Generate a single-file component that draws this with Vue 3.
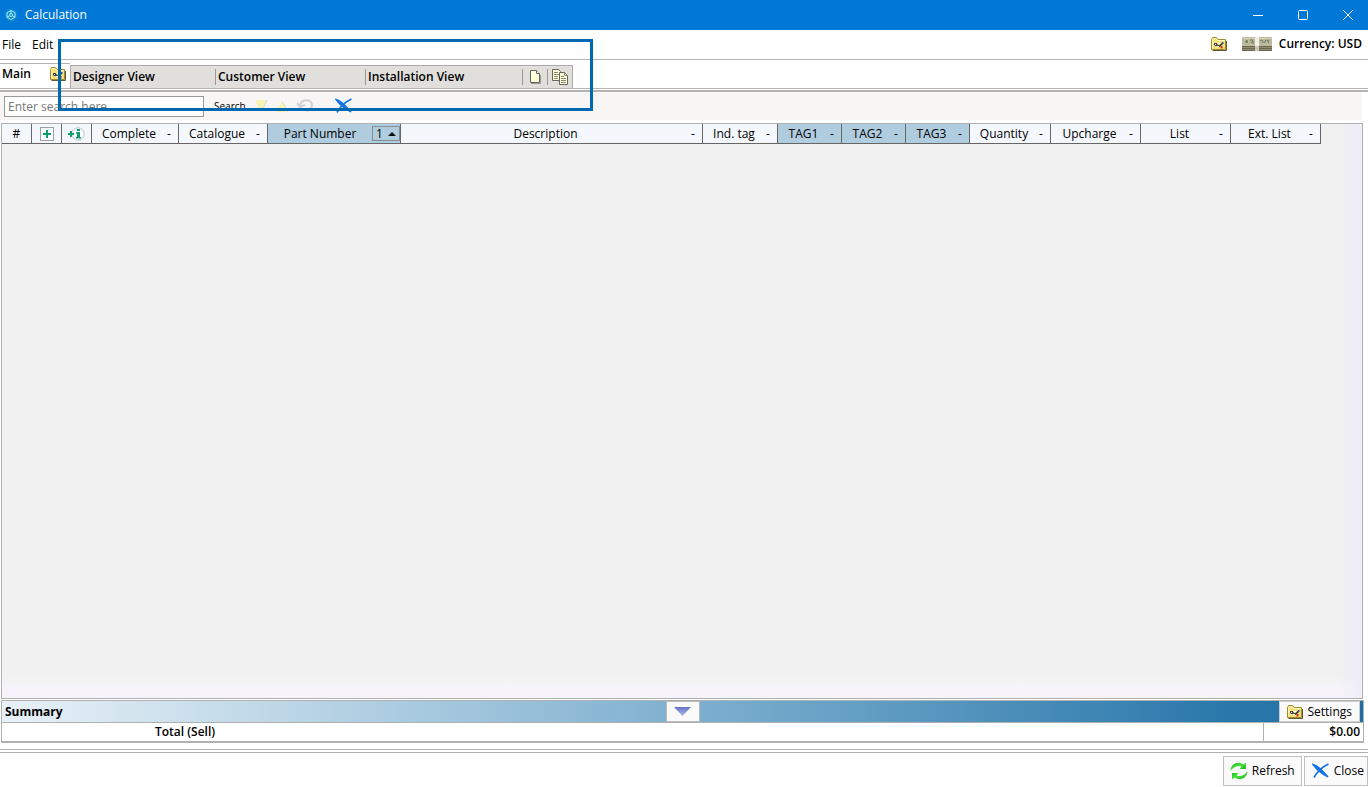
<script setup>
import { ref } from 'vue'

const search = ref('')
const views = [
  { name: 'Designer View', width: 145 },
  { name: 'Customer View', width: 150 },
  { name: 'Installation View', width: 157 },
]
const columns = [
  { id: 'no', label: '#', width: 30, plain: true },
  { id: 'add', icon: 'add', width: 30, plain: true },
  { id: 'info', icon: 'info', width: 30, plain: true },
  { id: 'complete', label: 'Complete', width: 87 },
  { id: 'catalogue', label: 'Catalogue', width: 89 },
  { id: 'part', label: 'Part Number', width: 133, marked: true, sort: 1 },
  { id: 'desc', label: 'Description', width: 0 },
  { id: 'ind', label: 'Ind. tag', width: 75 },
  { id: 'tag1', label: 'TAG1', width: 64, marked: true },
  { id: 'tag2', label: 'TAG2', width: 64, marked: true },
  { id: 'tag3', label: 'TAG3', width: 64, marked: true },
  { id: 'qty', label: 'Quantity', width: 81 },
  { id: 'up', label: 'Upcharge', width: 90 },
  { id: 'list', label: 'List', width: 90 },
  { id: 'ext', label: 'Ext. List', width: 90 },
]
</script>

<template>
  <svg class="defs" aria-hidden="true">
    <defs>
      <linearGradient id="arrow-fill" x1="0" y1="0" x2="0" y2="1">
        <stop offset="0" stop-color="#6475c2" />
        <stop offset="1" stop-color="#a9b8ea" />
      </linearGradient>
      <linearGradient id="refresh-fill" x1="0" y1="0" x2="1" y2="1">
        <stop offset="0" stop-color="#19b52a" />
        <stop offset=".5" stop-color="#4be336" />
        <stop offset="1" stop-color="#12a12c" />
      </linearGradient>
      <symbol id="folder" viewBox="0 0 16 14">
        <path d="M1.500 13.500h14V4" fill="none" stroke="#5f5a3a" />
        <path d="M.5 12.500V2.500l1-2h4l1.500 2h7.500v10z" fill="#f5e07a" stroke="#a08a2c" />
        <path d="M1.500 11V2.500L2 1.500h3l1.500 2h7" fill="none" stroke="#fff8c4" />
        <path d="M3 6h3v3H4L3 8z" fill="#3b4560" />
        <path d="M6 7l2 1.500L12 5v2L8.500 10 6 8.500z" fill="#2c3040" />
        <path d="M4 7h1v1H4zM7 6h2v1H7zM6 9h2v1H6z" fill="#fff" />
        <path d="M9.500 9h2v2.500h-2z" fill="#d8291e" />
        <path d="M10.500 5h2v2h-1z" fill="#2858b0" />
      </symbol>
      <symbol id="cross" viewBox="0 0 18 16">
        <path d="M1 1.500c4 1 10 6.500 15 12.500-6-3-11-7-15-12.500z" fill="#1473e6" stroke="#1473e6" stroke-width="1.300" />
        <path d="M16.500 1C10 4 5 9 2 14.500 5 9 10 4 16.500 1z" fill="#1473e6" stroke="#1473e6" stroke-width="1.600" />
      </symbol>
    </defs>
  </svg>

  <div class="window">
    <header class="titlebar">
      <svg class="app-icon" viewBox="0 0 14 14">
        <circle cx="7" cy="7" r="6.500" fill="#0b86d4" />
        <path d="M7 2.500l4 2.200v4.600l-4 2.200-4-2.200V4.700zM7 2.500v3M3 9.300l2.500-1.500M11 9.300L8.500 7.800" fill="none" stroke="#a9f2f2" />
        <circle cx="7" cy="7" r="1.500" fill="none" stroke="#a9f2f2" />
      </svg>
      <h1>Calculation</h1>
      <div class="controls">
        <button aria-label="Minimize"><svg viewBox="0 0 12 12"><path d="M1 6.500h10" /></svg></button>
        <button aria-label="Maximize"><svg viewBox="0 0 12 12"><rect x="1.500" y="1.500" width="9" height="9" rx="1" /></svg></button>
        <button aria-label="Close window"><svg viewBox="0 0 12 12"><path d="M1 1l10 10M11 1L1 11" /></svg></button>
      </div>
    </header>

    <div class="menubar">
      <nav class="menus">
        <button>File</button>
        <button>Edit</button>
      </nav>
      <div class="currency">
        <button aria-label="Options"><svg class="folder"><use href="#folder" /></svg></button>
        <svg class="money" viewBox="0 0 31 14">
          <path d="M0 9h30v5H0z" fill="#6b6750" />
          <path d="M0 1l1-1h28l1 1v8H0z" fill="#bdba9c" />
          <path d="M1 1.500h28" stroke="#d6d3ba" />
          <path d="M0 10.500h13M17 10.500h13M0 12.500h13M17 12.500h13" stroke="#8f8b6e" />
          <path d="M3 5l2-2v3M3 5h3M8 3h3L9 6M11 4v3M18 4l2-1 1 3M22 6l2-3M25 3l2 3M27 3l-2 1" stroke="#6d7a63" fill="none" />
          <path d="M13 0h4v9h-4z" fill="#f1f0e6" />
          <path d="M13 9h4v5h-4z" fill="#c9c7b8" />
        </svg>
        <strong>Currency: USD</strong>
      </div>
    </div>

    <div class="tabs">
      <div class="tab-main">
        <button>Main</button>
        <svg class="folder"><use href="#folder" /></svg>
      </div>
      <div class="views">
        <button v-for="v in views" :key="v.name" class="view" :style="{ width: v.width + 'px' }">{{ v.name }}</button>
        <button class="view-icon" aria-label="New view">
          <svg viewBox="0 0 18 16">
            <path d="M5 14.500h9.500V6" fill="none" stroke="#999" />
            <path d="M4.500 1.500h6l3 3v9h-9z" fill="#ffffdc" stroke="#66665c" />
            <path d="M10.500 1.500v3h3" fill="#fff" stroke="#66665c" />
          </svg>
        </button>
        <button class="view-icon" aria-label="Copy view">
          <svg viewBox="0 0 18 16">
            <path d="M1.500.5h6l2 2v9h-8z" fill="#ffffdc" stroke="#66665c" />
            <path d="M3 3.500h4M3 5.500h5M3 7.500h4M3 9.500h4" stroke="#8b8b72" />
            <path d="M8.500 3.500h5l3 3v9h-8z" fill="#ffffdc" stroke="#66665c" />
            <path d="M13.500 3.500v3h3M10 7.500h3M10 9.500h5M10 11.500h5M10 13.500h5" fill="none" stroke="#8b8b72" />
          </svg>
        </button>
      </div>
    </div>

    <form class="searchbar" @submit.prevent>
      <input v-model="search" type="text" placeholder="Enter search here" aria-label="Search text" />
      <button class="search-label">Search</button>
      <button aria-label="Next"><svg class="tri" viewBox="0 0 14 14"><path d="M1 1h12L8 12H6z" fill="#f8f3b4" /><path d="M8 12l5-11" stroke="#d8d8d8" /></svg></button>
      <button aria-label="Previous"><svg class="tri" viewBox="0 0 14 14"><path d="M7 2l6 11H1z" fill="#f8f3b4" /><path d="M7 2l6 11" stroke="#d8d8d8" /></svg></button>
      <button aria-label="Reset"><svg class="undo" viewBox="0 0 18 16"><path d="M4 8C5 0 16 1 16 7c0 3-2 5-5 6M1 5l3 4 5-2" fill="none" stroke="#cfcfd6" stroke-width="2" /></svg></button>
      <button class="clear" aria-label="Clear"><svg class="cross"><use href="#cross" /></svg></button>
    </form>

    <main class="grid">
      <table>
        <colgroup>
          <col v-for="c in columns" :key="c.id" :style="c.width ? { width: c.width + 'px' } : {}" />
        </colgroup>
        <thead>
          <tr>
            <th v-for="c in columns" :key="c.id" :class="{ marked: c.marked }">
              <div class="cell">
                <svg v-if="c.icon === 'add'" class="add" viewBox="0 0 14 14" role="img" aria-label="Add">
                  <rect x=".5" y=".5" width="13" height="13" fill="#fbfffd" stroke="#9aa3a0" />
                  <path d="M7 3v8M3 7h8" stroke="#0e9e6a" stroke-width="2" />
                </svg>
                <svg v-else-if="c.icon === 'info'" class="info" viewBox="0 0 17 14" role="img" aria-label="Add information">
                  <circle cx="10" cy="7" r="6.200" fill="#fff" stroke="#b5c0c2" />
                  <path d="M3 4v6M0 7h6" stroke="#0e9e6a" stroke-width="2" />
                  <path d="M9 2h3v2H9zM8 5h4v5h1v1.500H8V10h1V6.500H8z" fill="#0e9e6a" />
                </svg>
                <span v-else class="label">{{ c.label }}</span>
                <span v-if="c.sort" class="sort">{{ c.sort }}<svg viewBox="0 0 8 4"><path d="M0 4l4-4 4 4z" fill="#111" /></svg></span>
                <span v-else-if="!c.plain" class="dash">-</span>
              </div>
            </th>
          </tr>
        </thead>
      </table>
    </main>

    <section class="summary">
      <div class="summary-head">
        <h2>Summary</h2>
        <button class="collapse" aria-label="Collapse summary">
          <svg viewBox="0 0 17 9"><path d="M0 0h17L8.500 9z" fill="url(#arrow-fill)" /></svg>
        </button>
        <button class="settings"><svg class="folder"><use href="#folder" /></svg>Settings</button>
      </div>
      <div class="total">
        <span class="total-name">Total (Sell)</span>
        <span class="total-value">$0.00</span>
      </div>
    </section>

    <footer class="actions">
      <button class="refresh">
        <svg viewBox="0 0 18 18">
          <path d="M.5 9C.5 2 8-1.500 13.500 2.500L16 .5V7H9.500l2-2.200C8 2.500 3 5 .5 9z" fill="url(#refresh-fill)" />
          <path d="M17.500 9c0 7-7.500 10.500-13 6.500L2 17.500V11h6.500l-2 2.200c3.500 2.300 8.500-.2 11-4.200z" fill="url(#refresh-fill)" />
        </svg>
        Refresh
      </button>
      <button class="close"><svg class="cross"><use href="#cross" /></svg>Close</button>
    </footer>

    <div class="highlight"></div>
  </div>
</template>

<style>
body {
  margin: 0;
  background: #fff;
}
</style>

<style scoped>
* {
  box-sizing: border-box;
}
.defs {
  position: absolute;
  width: 0;
  height: 0;
}
.window {
  position: relative;
  display: flex;
  flex-direction: column;
  height: 100vh;
  overflow: hidden;
  font: 12px/16px "Open Sans", "Noto Sans", sans-serif;
  color: #000;
}
button {
  padding: 0;
  border: 0;
  background: none;
  font: inherit;
  color: inherit;
}
svg {
  display: block;
  flex: none;
}
h1,
h2 {
  margin: 0;
  font-size: 12px;
}
.folder {
  width: 16px;
  height: 14px;
}
.cross {
  width: 18px;
  height: 16px;
}
.titlebar {
  display: flex;
  align-items: center;
  flex: none;
  height: 30px;
  padding-left: 4px;
  background: #0078d7;
  color: #fff;
}
.titlebar h1 {
  flex: 1;
  margin-left: 7px;
  font-weight: 400;
}
.app-icon {
  width: 14px;
  height: 14px;
}
.controls {
  display: flex;
  gap: 5px;
}
.controls button {
  display: flex;
  align-items: center;
  justify-content: center;
  width: 40px;
  height: 28px;
}
.controls svg {
  width: 12px;
  height: 12px;
  fill: none;
  stroke: #fff;
}
.menubar {
  display: flex;
  justify-content: space-between;
  flex: none;
  height: 30px;
  padding: 0 6px 0 2px;
  border-bottom: 1px solid #b4b4b4;
}
.menus {
  display: flex;
  gap: 11px;
}
.currency {
  display: flex;
  align-items: center;
  padding-bottom: 2px;
}
.currency strong {
  font-weight: 600;
}
.money {
  width: 31px;
  height: 14px;
  margin: 0 6px 0 15px;
}
.tabs {
  display: flex;
  align-items: flex-end;
  flex: none;
  height: 32px;
  padding-bottom: 2px;
  background: linear-gradient(#b4b4b4, #b4b4b4) 0 28px / 100% 1px no-repeat;
  border-bottom: 2px solid #b4b4b4;
}
.tab-main {
  display: flex;
  align-items: center;
  justify-content: space-between;
  width: 70px;
  height: 25px;
  padding: 0 4px 4px 2px;
  border-top: 1px solid #b4b4b4;
  font-weight: 600;
}
.views {
  display: flex;
  align-items: center;
  height: 23px;
  border: 1px solid #aaa;
  border-bottom: 0;
  background: #e1dfdc;
}
.view {
  height: 16px;
  padding-left: 2px;
  border-right: 1px solid #999;
  text-align: left;
  font-weight: 600;
  line-height: 14px;
}
.view-icon {
  height: 16px;
  padding: 0 3px;
}
.view-icon + .view-icon {
  border-left: 1px solid #999;
}
.view-icon svg {
  width: 18px;
  height: 16px;
}
.searchbar {
  display: flex;
  align-items: center;
  flex: none;
  height: 28px;
  margin-right: 6px;
  padding-left: 4px;
  background: #f7f6f5;
}
.searchbar input {
  width: 200px;
  height: 21px;
  padding: 0 3px;
  border: 1px solid #999;
  background: #fff;
  font: inherit;
}
.searchbar input::placeholder {
  color: #777;
  opacity: 1;
}
.search-label {
  margin: 0 8px 0 10px;
  font-size: 10px;
}
.tri {
  width: 14px;
  height: 14px;
  margin-right: 7px;
}
.undo {
  width: 18px;
  height: 16px;
}
.clear {
  margin-left: 21px;
}
.grid {
  flex: 1;
  margin: 3px 5px 0 1px;
  padding-right: 41px;
  border: 1px solid #b0b0b0;
  background:
    linear-gradient(to right, transparent calc(100% - 24px), #efedf8) no-repeat,
    linear-gradient(to bottom, transparent calc(100% - 22px), #f6f4fa calc(100% - 10px), #f6f4fa) no-repeat,
    #f1f1f1;
}
table {
  width: 100%;
  table-layout: fixed;
  border-collapse: separate;
  border-spacing: 0;
}
th {
  height: 20px;
  padding: 0;
  border-right: 1px solid #666;
  border-bottom: 1px solid #666;
  background: #f4f8fc;
  font-weight: 400;
}
th.marked {
  background: #b0cde0;
}
.cell {
  display: flex;
  align-items: center;
  justify-content: center;
  height: 19px;
}
.label {
  flex: 1;
}
.dash {
  width: 12px;
  padding-left: 1px;
  text-align: left;
}
.sort {
  display: flex;
  align-items: center;
  gap: 5px;
  width: 28px;
  height: 15px;
  padding-left: 3px;
  border: 1px solid #858c92;
}
.sort svg {
  width: 8px;
  height: 4px;
}
.add {
  width: 14px;
  height: 14px;
}
.info {
  width: 17px;
  height: 14px;
}
.summary {
  flex: none;
  margin: 1px 4px 0 1px;
  border: 1px solid #b0b0b0;
  border-bottom-width: 2px;
}
.summary-head {
  display: grid;
  grid-template-columns: 1fr 34px 1fr;
  align-items: center;
  height: 22px;
  padding: 0 3px;
  border-bottom: 1px solid #b0b0b0;
  background: linear-gradient(to right, #e8f1f7, #7baece 52%, #2a78ab 90%, #1f6fa5);
}
.collapse {
  display: flex;
  align-items: center;
  justify-content: center;
  height: 21px;
  border: 1px solid #b8b8b8;
  background: #fafafa;
}
.collapse svg {
  width: 17px;
  height: 9px;
}
.settings {
  display: flex;
  align-items: center;
  justify-self: end;
  gap: 5px;
  height: 21px;
  padding: 0 7px;
  border: 1px solid #ccc;
  background: #fafafa;
}
.total {
  display: flex;
  height: 18px;
  font-weight: 600;
  line-height: 18px;
}
.total-name {
  flex: 1;
  padding-left: 153px;
}
.total-value {
  width: 100px;
  padding-right: 3px;
  border-left: 1px solid #b0b0b0;
  text-align: right;
}
.actions {
  display: flex;
  justify-content: flex-end;
  flex: none;
  gap: 2px;
  height: 38px;
  margin-top: 6px;
  padding-top: 3px;
  border-top: 4px double #b0b0b0;
}
.actions button {
  display: flex;
  align-items: center;
  height: 30px;
  padding: 0 7px;
  border: 1px solid #c0c0c0;
  background: #fafafa;
}
.actions .refresh {
  gap: 4px;
  padding: 0 6px;
}
.refresh svg {
  width: 18px;
  height: 18px;
}
.actions .close {
  gap: 4px;
  padding-right: 3px;
}
.highlight {
  position: absolute;
  top: 39px;
  left: 58px;
  width: 535px;
  height: 72px;
  border: 3px solid #0068b0;
  pointer-events: none;
}
</style>
